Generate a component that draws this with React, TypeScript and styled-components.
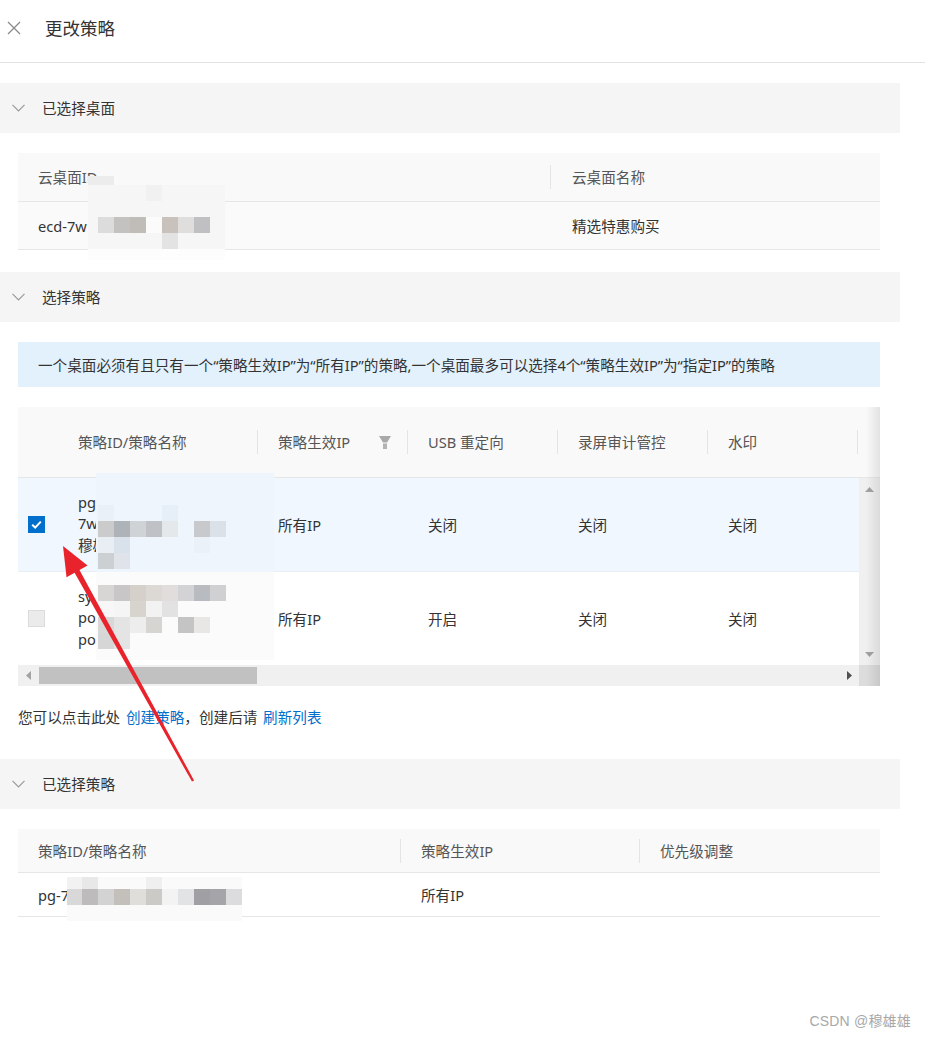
import React from "react";
import styled, { createGlobalStyle, css } from "styled-components";

const GlobalStyle = createGlobalStyle`
  html, body { margin: 0; padding: 0; background: #fff; }
  body {
    font-family: "Noto Sans", "Noto Sans CJK SC", sans-serif;
    color: #333;
    -webkit-font-smoothing: antialiased;
  }
  * { box-sizing: border-box; }
`;

const Page = styled.div`
  position: relative;
  width: 925px;
  height: 1039px;
  overflow: hidden;
  font-size: 14.6px;
  line-height: 22px;
`;

/* ---------- top bar ---------- */
const TopBar = styled.header`
  display: flex;
  align-items: center;
  gap: 24px;
  height: 63px;
  padding: 0 0 7px 7px;
  border-bottom: 1px solid #e2e2e2;
`;

const CloseIcon = styled.svg`
  width: 14px;
  height: 14px;
  flex: none;
`;

const Title = styled.h1`
  margin: 0;
  font-size: 17.5px;
  font-weight: 400;
  color: #333;
`;

/* ---------- sections ---------- */
const Main = styled.main`
  width: 900px;
  padding-top: 20px;
`;

const SectionHeader = styled.div`
  display: flex;
  align-items: center;
  gap: 17px;
  height: 50px;
  padding-left: 12px;
  background: #f5f5f5;
  color: #333;
`;

const Chevron = styled.svg`
  width: 13px;
  height: 8px;
  flex: none;
`;

const SectionBody = styled.div<{ $bottom?: number }>`
  padding: 20px 20px ${(p) => p.$bottom ?? 22}px 18px;
`;

/* ---------- generic tables ---------- */
const Grid = styled.div<{ $cols: string }>`
  display: grid;
  grid-template-columns: ${(p) => p.$cols};
`;

const HeadCell = styled.div<{ $h: number; $divider?: boolean; $pad?: number }>`
  position: relative;
  display: flex;
  align-items: center;
  height: ${(p) => p.$h}px;
  padding-left: ${(p) => p.$pad ?? 20}px;
  background: #f9f9f9;
  color: #555;
  border-bottom: 1px solid #e6e6e6;
  white-space: nowrap;
  ${(p) =>
    p.$divider &&
    css`
      &::before {
        content: "";
        position: absolute;
        left: 0;
        top: 50%;
        width: 1px;
        height: 24px;
        margin-top: -12px;
        background: #e4e4e4;
      }
    `}
`;

const BodyCell = styled.div<{ $h: number; $bg?: string; $pad?: number }>`
  display: flex;
  align-items: center;
  height: ${(p) => p.$h}px;
  padding-left: ${(p) => p.$pad ?? 20}px;
  background: ${(p) => p.$bg ?? "#fff"};
  color: #333;
  border-bottom: 1px solid #e6e6e6;
  white-space: nowrap;
`;

/* ---------- notice ---------- */
const Notice = styled.div`
  display: flex;
  align-items: center;
  height: 45px;
  padding-left: 20px;
  background: #e3f1fd;
  color: #333;
  white-space: nowrap;
  margin-bottom: 20px;
`;

/* ---------- policy table ---------- */
const POLICY_COLS = "39px 200px 150px 150px 150px 150px 150px";

const PolicyTable = styled.div`
  position: relative;
  width: 862px;
  overflow: hidden;
`;

const PolicyHead = styled.div`
  display: grid;
  grid-template-columns: ${POLICY_COLS};
  width: 1000px;
`;

const PolicyBody = styled.div`
  display: flex;
  height: 187px;
`;

const PolicyRows = styled.div`
  width: 841px;
  overflow: hidden;
`;

const PolicyRow = styled.div<{ $selected?: boolean; $h: number; $last?: boolean }>`
  display: grid;
  grid-template-columns: ${POLICY_COLS};
  width: 1000px;
  height: ${(p) => p.$h}px;
  background: ${(p) => (p.$selected ? "#f0f7fe" : "#fff")};
  border-bottom: ${(p) => (p.$last ? "none" : "1px solid #e6eef6")};
`;

const PCell = styled.div<{ $pad?: number }>`
  display: flex;
  align-items: center;
  padding-left: ${(p) => p.$pad ?? 21}px;
  white-space: nowrap;
  color: #333;
`;

const NameLines = styled.div`
  display: flex;
  flex-direction: column;
  line-height: 21.5px;
  margin-top: -1px;
`;

const HeadIPInner = styled.div`
  display: flex;
  align-items: center;
  justify-content: space-between;
  width: 100%;
  padding-right: 16px;
`;

const Checkbox = styled.span<{ $checked?: boolean }>`
  display: inline-flex;
  align-items: center;
  justify-content: center;
  width: 17px;
  height: 17px;
  margin-left: -1px;
  background: ${(p) => (p.$checked ? "#0070cc" : "#ebebeb")};
  border: 1px solid ${(p) => (p.$checked ? "#0070cc" : "#dcdcdc")};
`;

const VScroll = styled.div`
  display: flex;
  flex-direction: column;
  justify-content: space-between;
  align-items: center;
  width: 21px;
  padding: 9px 0 8px;
  background: #f0f0f0;
`;

const HScroll = styled.div`
  display: flex;
  height: 21px;
`;

const HTrack = styled.div`
  display: flex;
  align-items: center;
  width: 841px;
  padding: 0 7px 0 8px;
  background: #f0f0f0;
`;

const HThumb = styled.div`
  width: 218px;
  height: 17px;
  margin-left: 8px;
  background: #c1c1c1;
`;

const HFill = styled.div`
  flex: 1;
`;

const ScrollCorner = styled.div`
  width: 21px;
  background: #dcdcdc;
`;

const Arrow = styled.svg`
  flex: none;
  display: block;
`;

const EdgeShadow = styled.div`
  position: absolute;
  top: 0;
  right: 0;
  bottom: 0;
  width: 14px;
  background: linear-gradient(to right, rgba(0, 0, 0, 0), rgba(0, 0, 0, 0.09));
  pointer-events: none;
`;

/* ---------- hint line ---------- */
const Hint = styled.p`
  margin: 20px 0 9px;
  line-height: 22px;
  color: #333;
  white-space: nowrap;
  word-spacing: 2px;
`;

const Link = styled.a`
  color: #0070cc;
  text-decoration: none;
  cursor: pointer;
`;

/* ---------- overlays ---------- */
const Annotations = styled.svg`
  position: absolute;
  left: 0;
  top: 0;
  width: 925px;
  height: 1039px;
  pointer-events: none;
`;

const Watermark = styled.div`
  position: absolute;
  right: 14px;
  bottom: 7px;
  font-family: "Liberation Sans", "Noto Sans CJK SC", sans-serif;
  font-size: 14px;
  color: #a8a8a8;
  letter-spacing: 0.2px;
`;

/* ---------- icons ---------- */
const ChevronDown = () => (
  <Chevron viewBox="0 0 13 8">
    <polyline points="0.5,0.8 6.5,6.8 12.5,0.8" fill="none" stroke="#9a9a9a" strokeWidth="1.2" />
  </Chevron>
);

const FilterIcon = () => (
  <svg width="12" height="13" viewBox="0 0 12 13">
    <polygon points="0,0 12,0 8,6.5 4,6.5" fill="#a9a9a9" />
    <rect x="4" y="7.5" width="4" height="5.5" fill="#b3b3b3" />
  </svg>
);

/* ---------- mosaic data (page coordinates) ---------- */
type Block = [number, number, string, number?];

const mosaicBases: [number, number, number, number, string][] = [
  [88, 185, 137, 64, "#f6f6f6"],
  [88, 176, 26, 9, "#ececec"],
  [88, 249, 137, 11, "#fdfdfd"],
  [96, 473, 178, 99, "#eef5fc"],
  [96, 572, 178, 88, "#fbfbfb"],
  [67, 877, 175, 44, "#fafafa"],
];

const blocks: Block[] = [
  // desktop id
  [146, 185, "#f1f1f1"],
  [98, 217, "#dcdcdc"], [114, 217, "#c4c2c0"], [130, 217, "#c0bcb8"], [146, 217, "#fbfbfb"],
  [162, 217, "#c9c2bc"], [178, 217, "#e0dedc"], [194, 217, "#c0c0c2"],
  [162, 233, "#e3e3e3"],
  // policy row 1
  [98, 505, "#e9f0f7"], [162, 505, "#e6eef7"],
  [98, 521, "#cbcbcb"], [114, 521, "#adb3b9"], [130, 521, "#d0d3d6"], [146, 521, "#bfc1c6"],
  [162, 521, "#e5e8eb"], [194, 521, "#c8c9cc"], [210, 521, "#dbe1e8"],
  [98, 537, "#e8eef4"], [114, 537, "#d9e2ea"], [194, 537, "#eaf1f8"],
  [98, 553, "#cdd0d3"], [114, 553, "#e0e4ea"],
  // policy row 2
  [98, 585, "#d8d6d4"], [114, 585, "#c8c6c6"], [130, 585, "#d6d0ca"], [146, 585, "#dcd8d4"],
  [162, 585, "#e0dddc"], [178, 585, "#d3d3d5"], [194, 585, "#b8bcc0"], [210, 585, "#d0d0d3"],
  [98, 601, "#f7f7f7"], [114, 601, "#f5f5f5"], [130, 601, "#d7d3cd"], [146, 601, "#f2f2f2"], [162, 601, "#e2e2e2"],
  [98, 617, "#d8d8d8"], [114, 617, "#e4e4e4"], [130, 617, "#ecedec"], [146, 617, "#d7d5d2"],
  [178, 617, "#c4c4c4"], [194, 617, "#e8e7e5"],
  [98, 633, "#d6d6d6"], [114, 633, "#e4e4e4"],
  // selected policy
  [67, 877, "#f2f2f2", 15], [82, 877, "#e8e8e8"], [146, 877, "#efefef"],
  [67, 889, "#d8d8d8", 15], [82, 889, "#bdbbbb"], [98, 889, "#d3d3d3"], [114, 889, "#c3c0bc"],
  [130, 889, "#e0dedb"], [146, 889, "#cccac7"], [162, 889, "#f3f3f3"], [178, 889, "#e2e3e4"],
  [194, 889, "#a0a0a4"], [210, 889, "#a5a5a9"], [226, 889, "#dcdcdf"],
];

const Overlay = () => {
  const tip = { x: 63, y: 546 };
  const tail = { x: 193, y: 781 };
  const dx = tip.x - tail.x;
  const dy = tip.y - tail.y;
  const len = Math.hypot(dx, dy);
  const ux = dx / len;
  const uy = dy / len;
  const px = -uy;
  const py = ux;
  const headLen = 29;
  const headHalf = 12;
  const bx = tip.x - ux * headLen;
  const by = tip.y - uy * headLen;
  const head = [
    `${tip.x},${tip.y}`,
    `${bx + px * headHalf},${by + py * headHalf}`,
    `${bx - px * headHalf},${by - py * headHalf}`,
  ].join(" ");
  const sw0 = 2.8;
  const sw1 = 1.2;
  const sx = bx + ux * 4;
  const sy = by + uy * 4;
  const shaft = [
    `${sx + px * sw0},${sy + py * sw0}`,
    `${sx - px * sw0},${sy - py * sw0}`,
    `${tail.x - px * sw1},${tail.y - py * sw1}`,
    `${tail.x + px * sw1},${tail.y + py * sw1}`,
  ].join(" ");
  return (
    <Annotations viewBox="0 0 925 1039">
      {mosaicBases.map(([x, y, w, h, c], i) => (
        <rect key={`b${i}`} x={x} y={y} width={w} height={h} fill={c} />
      ))}
      {blocks.map(([x, y, c, w], i) => (
        <rect key={`m${i}`} x={x} y={y} width={w ?? 16} height={16} fill={c} />
      ))}
      <polygon points={shaft} fill="#e8232b" />
      <polygon points={head} fill="#e8232b" />
    </Annotations>
  );
};

export default function App() {
  return (
    <>
      <GlobalStyle />
      <Page>
        <TopBar>
          <CloseIcon viewBox="0 0 14 14">
            <path d="M1 1 L13 13 M13 1 L1 13" stroke="#8a8a8a" strokeWidth="1.3" fill="none" />
          </CloseIcon>
          <Title>更改策略</Title>
        </TopBar>

        <Main>
          <SectionHeader>
            <ChevronDown />
            <span>已选择桌面</span>
          </SectionHeader>
          <SectionBody>
            <Grid $cols="532px 1fr">
              <HeadCell $h={49}>云桌面ID</HeadCell>
              <HeadCell $h={49} $divider $pad={22}>云桌面名称</HeadCell>
              <BodyCell $h={48} $bg="#fafafa">ecd-7w</BodyCell>
              <BodyCell $h={48} $bg="#fafafa" $pad={22}>精选特惠购买</BodyCell>
            </Grid>
          </SectionBody>

          <SectionHeader>
            <ChevronDown />
            <span>选择策略</span>
          </SectionHeader>
          <SectionBody>
            <Notice>
              一个桌面必须有且只有一个“策略生效IP”为“所有IP”的策略,一个桌面最多可以选择4个“策略生效IP”为“指定IP”的策略
            </Notice>

            <PolicyTable>
              <PolicyHead>
                <HeadCell $h={71} />
                <HeadCell $h={71} $pad={21}>策略ID/策略名称</HeadCell>
                <HeadCell $h={71} $divider $pad={21}>
                  <HeadIPInner>
                    <span>策略生效IP</span>
                    <FilterIcon />
                  </HeadIPInner>
                </HeadCell>
                <HeadCell $h={71} $divider $pad={21}>USB 重定向</HeadCell>
                <HeadCell $h={71} $divider $pad={21}>录屏审计管控</HeadCell>
                <HeadCell $h={71} $divider $pad={21}>水印</HeadCell>
                <HeadCell $h={71} $divider $pad={21} />
              </PolicyHead>

              <PolicyBody>
                <PolicyRows>
                  <PolicyRow $selected $h={94}>
                    <PCell $pad={11}>
                      <Checkbox $checked>
                        <svg width="13" height="13" viewBox="0 0 13 13">
                          <polyline points="2.2,6.8 5.2,9.6 10.8,3.6" fill="none" stroke="#fff" strokeWidth="2" />
                        </svg>
                      </Checkbox>
                    </PCell>
                    <PCell>
                      <NameLines>
                        <span>pg</span>
                        <span>7w</span>
                        <span>穆雄</span>
                      </NameLines>
                    </PCell>
                    <PCell>所有IP</PCell>
                    <PCell>关闭</PCell>
                    <PCell>关闭</PCell>
                    <PCell>关闭</PCell>
                    <PCell />
                  </PolicyRow>
                  <PolicyRow $h={93} $last>
                    <PCell $pad={11}>
                      <Checkbox />
                    </PCell>
                    <PCell>
                      <NameLines>
                        <span>sy</span>
                        <span>po</span>
                        <span>po</span>
                      </NameLines>
                    </PCell>
                    <PCell>所有IP</PCell>
                    <PCell>开启</PCell>
                    <PCell>关闭</PCell>
                    <PCell>关闭</PCell>
                    <PCell />
                  </PolicyRow>
                </PolicyRows>
                <VScroll>
                  <Arrow width="9" height="5" viewBox="0 0 9 5">
                    <polygon points="4.5,0 9,5 0,5" fill="#a3a3a3" />
                  </Arrow>
                  <Arrow width="9" height="5" viewBox="0 0 9 5">
                    <polygon points="0,0 9,0 4.5,5" fill="#a3a3a3" />
                  </Arrow>
                </VScroll>
              </PolicyBody>

              <HScroll>
                <HTrack>
                  <Arrow width="5" height="9" viewBox="0 0 5 9">
                    <polygon points="5,0 5,9 0,4.5" fill="#a3a3a3" />
                  </Arrow>
                  <HThumb />
                  <HFill />
                  <Arrow width="5" height="9" viewBox="0 0 5 9">
                    <polygon points="0,0 5,4.5 0,9" fill="#505050" />
                  </Arrow>
                </HTrack>
                <ScrollCorner />
              </HScroll>
              <EdgeShadow />
            </PolicyTable>

            <Hint>
              您可以点击此处 <Link>创建策略</Link>，创建后请 <Link>刷新列表</Link>
            </Hint>
          </SectionBody>

          <SectionHeader>
            <ChevronDown />
            <span>已选择策略</span>
          </SectionHeader>
          <SectionBody>
            <Grid $cols="382px 239px 1fr">
              <HeadCell $h={44}>策略ID/策略名称</HeadCell>
              <HeadCell $h={44} $divider $pad={21}>策略生效IP</HeadCell>
              <HeadCell $h={44} $divider $pad={21}>优先级调整</HeadCell>
              <BodyCell $h={44}>pg-7</BodyCell>
              <BodyCell $h={44} $pad={21}>所有IP</BodyCell>
              <BodyCell $h={44} $pad={21} />
            </Grid>
          </SectionBody>
        </Main>

        <Overlay />
        <Watermark>CSDN @穆雄雄</Watermark>
      </Page>
    </>
  );
}
